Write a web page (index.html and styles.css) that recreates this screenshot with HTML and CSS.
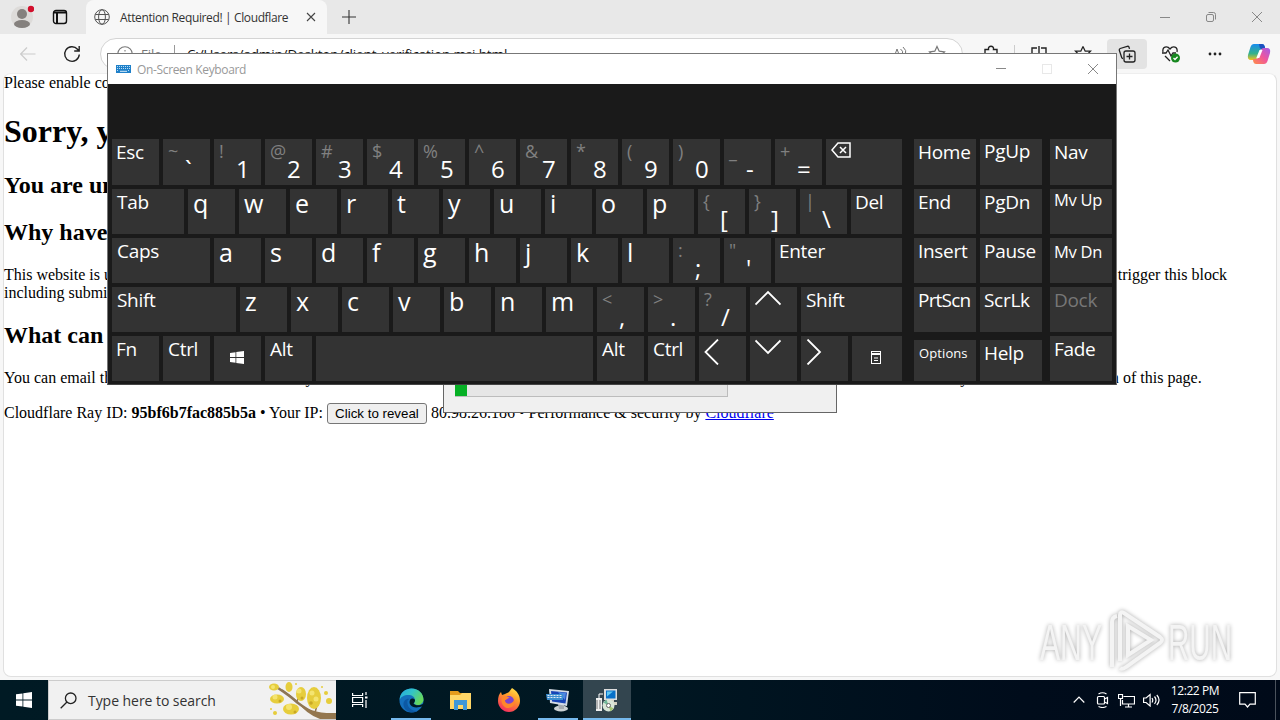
FILE: index.html
```html
<!DOCTYPE html>
<html lang="en">
<head>
    <meta charset="UTF-8">
    <meta name="viewport" content="width=device-width, initial-scale=1.0">
    <title>Attention Required! | Cloudflare</title>
    <link rel="stylesheet" href="styles.css">
</head>
<body>
    <div class="browser">
        <header class="tabstrip">
            <svg class="avatar" width="24" height="24" viewBox="0 0 24 24"><circle cx="12" cy="12" r="11" fill="#dddbd9"/><circle cx="12" cy="9" r="5" fill="#85817e"/><ellipse cx="12" cy="19" rx="8" ry="4" fill="#85817e"/><circle cx="21" cy="4" r="3.2" fill="#d20f2c"/></svg>
            <svg class="workspaces" width="16" height="16" viewBox="0 0 16 16" fill="none" stroke="#111" stroke-width="1.4"><rect x="1.5" y="1.5" width="13" height="13" rx="2.5"/><path d="M1.5 3.5h13M5 4v10" stroke-width="2"/></svg>
            <div class="tab">
                <svg width="16" height="16" viewBox="0 0 16 16" fill="none" stroke="#555"><circle cx="8" cy="8" r="7.3"/><ellipse cx="8" cy="8" rx="3.4" ry="7.3"/><path d="M1.3 5.5h13.4M1.3 10.5h13.4"/></svg>
                <span class="tab-title">Attention Required! | Cloudflare</span>
                <svg width="10" height="10" viewBox="0 0 10 10" stroke="#444" stroke-width="1.1"><path d="M1 1l8 8M9 1l-8 8"/></svg>
            </div>
            <svg class="new-tab" width="14" height="14" viewBox="0 0 14 14" stroke="#333" stroke-width="1.1"><path d="M7 0v14M0 7h14"/></svg>
            <div class="win-buttons">
                <svg width="12" height="12" viewBox="0 0 12 12" stroke="#888"><path d="M1 6.5h10"/></svg>
                <svg width="12" height="12" viewBox="0 0 12 12" fill="none" stroke="#888"><rect x="1.5" y="3.5" width="7" height="7" rx="1.5"/><path d="M3.5 1.5h5q2 0 2 2v5"/></svg>
                <svg width="12" height="12" viewBox="0 0 12 12" stroke="#888"><path d="M1 1l10 10M11 1l-10 10"/></svg>
            </div>
        </header>
        <div class="toolbar">
            <svg class="back" width="16" height="14" viewBox="0 0 16 14" fill="none" stroke="#ccc" stroke-width="1.2"><path d="M15.5 7h-15M7 .5L.7 7 7 13.5"/></svg>
            <svg class="reload" width="18" height="18" viewBox="0 0 18 18" fill="none" stroke="#222" stroke-width="1.4"><path d="M16.3 9.5a7.3 7.3 0 1 1-1.8-5.3l1.5 1.5M16.2 1v5h-5"/></svg>
            <div class="address">
                <svg width="16" height="16" viewBox="0 0 16 16" fill="none" stroke="#777" stroke-width="1.1"><circle cx="8" cy="8" r="7.3"/><path d="M8 7v5M8 4v1.5"/></svg>
                <span class="scheme">File</span>
                <span class="url">C:/Users/admin/Desktop/client_verification.msi.html</span>
                <svg width="16" height="16" viewBox="0 0 16 16" fill="none" stroke="#777"><path d="M2 14L6 3l4 11M3.5 10h5M9.500 3q3 2 2 5M12 1q4 3 2.500 8"/></svg>
                <svg class="fav" width="18" height="18" viewBox="0 0 18 18" fill="none" stroke="#777" stroke-width="1.2"><path d="M9 1.500l2.200 4.700 5.300.7-3.900 3.600 1 5.200L9 13.200l-4.600 2.500 1-5.200-3.900-3.600 5.300-.7z"/></svg>
            </div>
            <div class="tools">
                <svg class="extensions" width="18" height="18" viewBox="0 0 18 18" fill="none" stroke="#222" stroke-width="1.4"><path d="M3 4.500h3.500c-.8-4.400 5.800-4.400 5 0H15v4c-3-.5-3 4.500 0 4V16H3v-3.500c3.500.5 3.500-4.500 0-4z"/></svg>
                <i class="sep"></i>
                <span class="tool"><svg width="18" height="18" viewBox="0 0 18 18" fill="none" stroke="#222" stroke-width="1.4"><path d="M7 3H2v12h5M11 3h5v12h-5M9 1v16"/></svg></span>
                <span class="tool"><svg width="18" height="18" viewBox="0 0 18 18" fill="none" stroke="#222" stroke-width="1.3"><path d="M9 1.500l2.200 4.700H16.500l-3.900 4 1 5.200M9 1.500L6.800 6.200H1.500l3.900 4-1 5.200L9 13"/></svg></span>
                <span class="tool active"><svg width="18" height="18" viewBox="0 0 18 18" fill="none" stroke="#222" stroke-width="1.3"><path d="M5 13.500q-1 0-1.300-1L1.300 5.300Q1 4 2.200 3.500l7-2.200q1.300-.3 1.800.8l.5 1.800"/><rect x="6" y="6" width="11" height="11" rx="2"/><path d="M11.500 8.500v6M8.500 11.500h6"/></svg></span>
                <span class="tool"><svg width="20" height="18" viewBox="0 0 20 18" fill="none" stroke="#222" stroke-width="1.3"><path d="M2 7C1 2 6 0 9 4c3-4 8-2 7 3M1 8h4l2-3 3 6 2-3h3M4 11l5 5"/><circle cx="14.500" cy="13" r="4.500" fill="#16881f" stroke="none"/><path d="M12.500 13l1.500 1.500 2.600-2.800" stroke="#fff"/></svg></span>
                <span class="tool"><svg width="14" height="4" viewBox="0 0 14 4" fill="#222"><circle cx="2" cy="2" r="1.4"/><circle cx="7" cy="2" r="1.4"/><circle cx="12" cy="2" r="1.4"/></svg></span>
                <span class="tool"><svg width="24" height="22" viewBox="0 0 24 22">
                    <defs>
                        <linearGradient id="cp1" x1="0" y1="0" x2="0" y2="1"><stop offset="0" stop-color="#178cf0"/><stop offset=".6" stop-color="#35b28b"/><stop offset="1" stop-color="#f5c21d"/></linearGradient>
                        <linearGradient id="cp2" x1="1" y1="0" x2="0" y2="1"><stop offset="0" stop-color="#a25bea"/><stop offset=".5" stop-color="#f0569b"/><stop offset="1" stop-color="#ff8f45"/></linearGradient>
                    </defs>
                    <path d="M7 1h8q2 0 2.600 2l.7 3h-3q-2 0-2.700 2L10 15q-.8 2-2.500 2H4q-4 0-3-5l2.500-8Q4.500 1 7 1z" fill="url(#cp1)"/>
                    <path d="M12 1h3q2 0 2.600 2l.7 3h-3q-2 0-2.500-1z" fill="#1c50bf"/>
                    <path d="M17 21H9q-2 0-2.600-2l-.6-3h3q2 0 2.700-2L14 7q.8-2 2.500-2H20q4 0 3 5l-2.500 8q-1 3-3.500 3z" fill="url(#cp2)"/>
                    <path d="M12.500 7h3l-3.200 8h-3z" fill="#fff"/>
                </svg></span>
            </div>
        </div>
        <main class="page">
            <div>Please enable cookies.</div>
            <h1>Sorry, you have been blocked</h1>
            <h2>You are unable to access this website</h2>
            <h2>Why have I been blocked?</h2>
            <p>This website is using a security service to protect itself from online attacks. The action you just performed triggered the security solution. There are several actions that could trigger this block including submitting a certain word or phrase, a SQL command or malformed data.</p>
            <h2>What can I do to resolve this?</h2>
            <p>You can email the site owner to let them know you were blocked. Please include what you were doing when this page came up and the Cloudflare Ray ID found at the bottom of this page.</p>
            <p>Cloudflare Ray ID: <strong>95bf6b7fac885b5a</strong> • Your IP: <button class="reveal">Click to reveal</button> 80.98.26.186 • Performance &amp; security by <a href="#">Cloudflare</a></p>
        </main>
    </div>

    <!-- Installer progress dialog -->
    <div class="dialog"><div class="progress"><div class="progress-bar"></div></div></div>

    <!-- On-screen keyboard -->
    <section class="osk">
        <div class="osk-title">
            <svg width="15" height="8" viewBox="0 0 15 8"><rect width="15" height="8" fill="#1f80c9"/><path d="M1 1.500h13M1 3.500h13M1 5.500h2M12 5.500h2" stroke="#b8dcf5" stroke-dasharray="1 1"/><path d="M4 6.300h7" stroke="#d8ecfa"/></svg>
            <span>On-Screen Keyboard</span>
            <div class="osk-buttons">
                <svg width="12" height="12" viewBox="0 0 12 12" stroke="#888"><path d="M1 5.500h10"/></svg>
                <svg width="12" height="12" viewBox="0 0 12 12" fill="none" stroke="#e8e8e8"><rect x="1.500" y="1.500" width="9" height="9"/></svg>
                <svg width="12" height="12" viewBox="0 0 12 12" stroke="#888"><path d="M1 1l10 10M11 1l-10 10"/></svg>
            </div>
        </div>
        <div class="osk-body">
            <div class="keys">
                <div class="row">
                    <div class="key esc">Esc</div>
                    <div class="key dual"><sup>~</sup><b>`</b></div>
                    <div class="key dual"><sup>!</sup><b>1</b></div>
                    <div class="key dual"><sup>@</sup><b>2</b></div>
                    <div class="key dual"><sup>#</sup><b>3</b></div>
                    <div class="key dual"><sup>$</sup><b>4</b></div>
                    <div class="key dual"><sup>%</sup><b>5</b></div>
                    <div class="key dual"><sup>^</sup><b>6</b></div>
                    <div class="key dual"><sup>&amp;</sup><b>7</b></div>
                    <div class="key dual"><sup>*</sup><b>8</b></div>
                    <div class="key dual"><sup>(</sup><b>9</b></div>
                    <div class="key dual"><sup>)</sup><b>0</b></div>
                    <div class="key dual"><sup>_</sup><b>-</b></div>
                    <div class="key dual"><sup>+</sup><b>=</b></div>
                    <div class="key fill"><svg class="backspace" width="20" height="16" viewBox="0 0 20 16" fill="none" stroke="#fff" stroke-width="1.5"><path d="M7 1h12v14H7L1 8z"/><path d="M9 5l6 6M15 5l-6 6"/></svg></div>
                </div>
                <div class="row">
                    <div class="key tab-key">Tab</div>
                    <div class="key letter">q</div>
                    <div class="key letter">w</div>
                    <div class="key letter">e</div>
                    <div class="key letter">r</div>
                    <div class="key letter">t</div>
                    <div class="key letter">y</div>
                    <div class="key letter">u</div>
                    <div class="key letter">i</div>
                    <div class="key letter">o</div>
                    <div class="key letter">p</div>
                    <div class="key dual"><sup>{</sup><b>[</b></div>
                    <div class="key dual"><sup>}</sup><b>]</b></div>
                    <div class="key dual"><sup>|</sup><b>\</b></div>
                    <div class="key fill narrow-pad">Del</div>
                </div>
                <div class="row">
                    <div class="key caps">Caps</div>
                    <div class="key letter">a</div>
                    <div class="key letter">s</div>
                    <div class="key letter">d</div>
                    <div class="key letter">f</div>
                    <div class="key letter">g</div>
                    <div class="key letter">h</div>
                    <div class="key letter">j</div>
                    <div class="key letter">k</div>
                    <div class="key letter">l</div>
                    <div class="key dual"><sup>:</sup><b>;</b></div>
                    <div class="key dual"><sup>"</sup><b>'</b></div>
                    <div class="key fill narrow-pad">Enter</div>
                </div>
                <div class="row">
                    <div class="key shift">Shift</div>
                    <div class="key letter">z</div>
                    <div class="key letter">x</div>
                    <div class="key letter">c</div>
                    <div class="key letter">v</div>
                    <div class="key letter">b</div>
                    <div class="key letter">n</div>
                    <div class="key letter">m</div>
                    <div class="key dual"><sup>&lt;</sup><b>,</b></div>
                    <div class="key dual"><sup>&gt;</sup><b>.</b></div>
                    <div class="key dual"><sup>?</sup><b>/</b></div>
                    <div class="key"><svg class="arrow" width="26" height="26" viewBox="0 0 26 26"><path d="M.5 14.500L13 2l12.500 12.500"/></svg></div>
                    <div class="key fill">Shift</div>
                </div>
                <div class="row">
                    <div class="key narrow-pad">Fn</div>
                    <div class="key">Ctrl</div>
                    <div class="key icon-key"><svg width="14" height="13" viewBox="0 0 14 13" fill="#fff"><path d="M0 2l5.500-.8V6H0zM6.300 1L14 0v6H6.300zM0 6.900h5.500v4.900L0 11zM6.300 6.900H14V13l-7.700-1z"/></svg></div>
                    <div class="key">Alt</div>
                    <div class="key fill"></div>
                    <div class="key">Alt</div>
                    <div class="key">Ctrl</div>
                    <div class="key"><svg class="arrow" width="26" height="26" viewBox="0 0 26 26"><path d="M14 .5L1.500 13 14 25.500"/></svg></div>
                    <div class="key"><svg class="arrow" width="26" height="26" viewBox="0 0 26 26"><path d="M.5 1.500L13 14 25.500 1.500"/></svg></div>
                    <div class="key"><svg class="arrow" width="26" height="26" viewBox="0 0 26 26"><path d="M1.500 .5L14 13 1.500 25.500"/></svg></div>
                    <div class="key menu-key icon-key"><svg width="10" height="13" viewBox="0 0 10 13" fill="none" stroke="#fff"><rect x=".5" y=".5" width="9" height="12"/><path d="M0 2.500h10M0 3.500h10M3 7h4M3 9.500h4"/></svg></div>
                </div>
            </div>
            <div class="nav-keys">
                <div class="key">Home</div>
                <div class="key raised">PgUp</div>
                <div class="key">Nav</div>
                <div class="key">End</div>
                <div class="key">PgDn</div>
                <div class="key small up">Mv Up</div>
                <div class="key">Insert</div>
                <div class="key">Pause</div>
                <div class="key small">Mv Dn</div>
                <div class="key narrow">PrtScn</div>
                <div class="key">ScrLk</div>
                <div class="key disabled">Dock</div>
                <div class="key low tiny">Options</div>
                <div class="key low">Help</div>
                <div class="key">Fade</div>
            </div>
        </div>
    </section>

    <svg class="watermark" width="240" height="70" viewBox="0 0 240 70">
        <text x="6" y="54" textLength="62" lengthAdjust="spacingAndGlyphs">ANY</text>
        <path d="M78 61V16q0-5 5-6M86 55V9q0-4 4-2l36 24q4 3 0 6L92 61q-4 3-6 1M94 20v29l23-15z"/>
        <text x="134" y="54" textLength="64" lengthAdjust="spacingAndGlyphs">RUN</text>
    </svg>

    <footer class="taskbar">
        <div class="start"><svg width="16" height="16" viewBox="0 0 16 16" fill="#fff"><path d="M0 2.300l6.500-.9v6.200H0zM7.300 1.300L16 0v7.600H7.300zM0 8.400h6.500v6.200L0 13.700zM7.300 8.400H16V16l-8.700-1.300z"/></svg></div>
        <div class="search">
            <svg width="17" height="17" viewBox="0 0 17 17" fill="none" stroke="#222" stroke-width="1.3"><circle cx="10.700" cy="6.300" r="5.300"/><path d="M7 10L.7 16.300"/></svg>
            <span>Type here to search</span>
            <svg class="branch" width="68" height="38" viewBox="0 0 68 38">
                <path d="M10 7q12 8 20 15 8 6 22 14" fill="none" stroke="#8d7656" stroke-width="2.5"/>
                <path d="M30 21q12 12 38 11v6H52Q38 33 30 21z" fill="#93774f"/>
                <path d="M29 20l4-8M47 32l2-8" stroke="#93774f" stroke-width="1.5"/>
                <g fill="#e6cd3c"><ellipse cx="6" cy="6" rx="5" ry="3.5"/><ellipse cx="21" cy="6" rx="3.5" ry="5"/><ellipse cx="9" cy="18" rx="7" ry="4.5"/><ellipse cx="33" cy="13" rx="5" ry="7"/><ellipse cx="23" cy="28" rx="8" ry="5.5"/><ellipse cx="46" cy="17" rx="7" ry="11"/><circle cx="58" cy="12" r="2"/><circle cx="61" cy="20" r="3"/><circle cx="7" cy="32" r="2"/><circle cx="3" cy="28" r="1"/><circle cx="54" cy="6" r="1"/><circle cx="28" cy="3" r="1"/></g>
                <g fill="#f4e470"><circle cx="5" cy="6" r="2"/><circle cx="7" cy="16" r="2.5"/><circle cx="31" cy="10" r="2.5"/><circle cx="21" cy="26" r="3"/><circle cx="44" cy="12" r="2.5"/><circle cx="48" cy="18" r="2.5"/></g>
                <g fill="#c9a824"><circle cx="12" cy="20" r="1.5"/><circle cx="34" cy="17" r="1.5"/><circle cx="27" cy="31" r="1.5"/><circle cx="43" cy="22" r="1.8"/></g>
                <path d="M14 9q9 6 16 13" fill="none" stroke="#8d7656" stroke-width="2"/>
            </svg>
        </div>
        <div class="apps">
            <div class="app taskview"><svg width="16" height="16" viewBox="0 0 16 16" fill="none" stroke="#fff" stroke-width="1.2"><path d="M.6 1v2.500h10V1M.6 15v-2.500h10V15M.6 5.500h10v5H.6zM14 0v3M14 8v8"/><path d="M13 5.500h2.500" stroke-width="2"/></svg></div>
            <div class="app running">
                <svg width="25" height="25" viewBox="0 0 25 25">
                    <defs><linearGradient id="edge" x1="0" y1="0" x2="1" y2=".5"><stop offset="0" stop-color="#25a9e3"/><stop offset=".5" stop-color="#32c4c8"/><stop offset="1" stop-color="#67d85c"/></linearGradient></defs>
                    <circle cx="12.500" cy="12.500" r="12" fill="#1470bd"/>
                    <path d="M.6 12C1 4 7 .5 12.500.5 20 .5 24.500 6 24.500 11.500c0 5-6 7-9 4.500-1-1 .5-1.500.5-4 0-3-3-5-6.500-5C5 7 1.500 9 .6 12z" fill="url(#edge)"/>
                    <path d="M11 12c-2 5 3 10 13 6v-2c-4 2-8 1.500-9.500-.5.8-1 1.500-2 1.500-3.500-1-2-4-2-5 0z" fill="#001923"/>
                    <path d="M8.500 13c-1 6 4 10 10 10-5 3-13 1-14-6-.4-4 3-7 6-6-1 .5-1.700 1-2 2z" fill="#0c59a4"/>
                </svg>
            </div>
            <div class="app">
                <svg width="23" height="20" viewBox="0 0 23 20"><path d="M1 1h8l2 2h11v16H1z" fill="#e59b1c"/><path d="M1 5h10l2-2h9v16H1z" fill="#ffd667"/><path d="M5 10h13v10h-4v-5H9v5H5z" fill="#3f97d8"/></svg>
            </div>
            <div class="app">
                <svg width="24" height="24" viewBox="0 0 24 24">
                    <defs><linearGradient id="fox" x1=".8" y1="0" x2=".3" y2="1"><stop offset="0" stop-color="#ffe34a"/><stop offset=".4" stop-color="#ff9a2a"/><stop offset="1" stop-color="#f52b60"/></linearGradient></defs>
                    <path d="M15 0c5 3 8 7 8 13 0 6-5 11-11 11S1 19 1 13c0-4 1-7 3-9l1 3 3-1c2-1 4-2 4-2 1-1 2-3 3-4z" fill="url(#fox)"/>
                    <circle cx="12" cy="13" r="5" fill="#7b43d0"/><path d="M5 9c3-1 5-1 8 1-3 0-3 2-5 2 0 5 7 5 9 0 2 5-2 8-6 8s-8-5-6-11z" fill="#ff862c"/>
                </svg>
            </div>
            <div class="app running">
                <svg width="24" height="24" viewBox="0 0 24 24"><ellipse cx="15" cy="20.500" rx="7" ry="3" fill="#cbd1d3"/><path d="M12 16h6v5h-5z" fill="#a5abb0"/><path d="M3 1l20 2-2 15L4 15z" fill="#d3dbe5"/><path d="M5 3l16 1.500-1.500 11L6 13.500z" fill="#1744b6"/><path d="M12 4l8 1-1 7z" fill="#4c87e1"/><path d="M0 6h17v6H1z" fill="#3b8ed0"/><path d="M1.500 7.500h15M1.500 9.500h15" stroke="#e3eaf2" stroke-dasharray="2 1"/></svg>
            </div>
            <div class="app active running">
                <svg width="24" height="24" viewBox="0 0 24 24"><path d="M9 1h13v11H9z" fill="#ddd"/><path d="M11 2.500h9.500v8H11z" fill="#0870c9"/><path d="M12 3.500h6l-6 5z" fill="#5fc8f3"/><path d="M12 12h7v2h3v3H11z" fill="#d5d2c3"/><path d="M1 10h6v13H1z" fill="#eee"/><path d="M2 12v9M5 12v9" stroke="#777"/><path d="M8 6H4v5" stroke="#fff" fill="none"/><circle cx="13.500" cy="17.500" r="6" fill="#d9e6d8"/><path d="M13.500 17.500l-5-3 3-3z" fill="#70b798"/><path d="M13.500 17.500l5 3-3 3z" fill="#a3c66f"/><circle cx="13.500" cy="17.500" r="2" fill="#fff" stroke="#666"/></svg>
            </div>
        </div>
        <div class="tray">
            <svg class="chevron" width="12" height="8" viewBox="0 0 12 8"><path d="M.7 6.500L6 1.200l5.300 5.300"/></svg>
            <svg width="14" height="16" viewBox="0 0 14 16"><rect x="1.500" y="4.500" width="7" height="7.500" rx="1"/><path d="M8.500 7l3-1.500v6l-3-1.500M2.500 2Q6.500-.5 10.500 2M2.500 14.500q4 2 8 0"/></svg>
            <svg width="17" height="15" viewBox="0 0 17 15"><path d="M5.500 3.500h11v7.500h-12V7M10.500 11v3M7 14h7M.5 1.500h4v4h-4zM2.500 5.500V13"/></svg>
            <svg width="17" height="14" viewBox="0 0 17 14"><path d="M.6 5v4.500h2.500l4 3.500V1.500L3.100 5zM9 5q1.500 2.300 0 4.500M11.500 3.500q3 3.700 0 7.300M13.800 2q4.500 5 0 10"/></svg>
            <div class="clock">12:22 PM<br>7/8/2025</div>
            <svg class="notify" width="17" height="16" viewBox="0 0 17 16"><path d="M.7.7h15.600v11.500H11L8.500 15 6 12.200H.7z"/></svg>
            <i class="peek"></i>
        </div>
    </footer>
</body>
</html>
```
FILE: styles.css
```css
* {
    box-sizing: border-box;
}

body {
    margin: 0;
    width: 1280px;
    height: 720px;
    overflow: hidden;
    position: relative;
    font-family: "Open Sans", "Noto Sans", sans-serif;
}

svg {
    display: block;
    flex: none;
}

/* Browser window */
.browser {
    height: 680px;
    background: #f7f7f7;
    display: flex;
    flex-direction: column;
}

.tabstrip {
    height: 34px;
    flex: none;
    display: flex;
    align-items: center;
    background: #e8e8e8;
}

.avatar {
    margin: 0 0 0 10px;
}

.workspaces {
    margin: 0 18px;
}

.tab {
    width: 241px;
    height: 34px;
    display: flex;
    align-items: center;
    padding: 0 11px 0 8px;
    background: #f7f7f7;
    border-radius: 8px 8px 0 0;
}

.tab-title {
    flex: 1;
    margin-left: 10px;
    font-size: 12px;
    letter-spacing: -0.37px;
    white-space: nowrap;
    color: #333;
}

.new-tab {
    margin-left: 15px;
}

.win-buttons {
    margin-left: auto;
    margin-right: 17px;
    display: flex;
    gap: 34px;
}

.toolbar {
    height: 39px;
    flex: none;
    display: flex;
    align-items: center;
    padding-left: 20px;
}

.reload {
    margin: 0 19px 0 27px;
}

.address {
    width: 863px;
    height: 32px;
    display: flex;
    align-items: center;
    padding: 0 16px;
    background: #fff;
    border: 1px solid #d4d4d4;
    border-radius: 16px;
}

.scheme {
    width: 34px;
    height: 18px;
    margin-left: 8px;
    line-height: 18px;
    font-size: 13px;
    color: #777;
    border-right: 1px solid #999;
}

.url {
    flex: 1;
    margin-left: 12px;
    font-size: 13.5px;
    letter-spacing: -0.15px;
    color: #111;
}

.fav {
    margin-left: 21px;
}

.tools {
    flex: 1;
    display: flex;
    align-items: center;
}

.extensions {
    margin-left: 19px;
}

.sep {
    width: 1px;
    height: 18px;
    margin-left: 14px;
    background: #ccc;
}

.tool {
    width: 40px;
    height: 30px;
    margin-right: 4px;
    display: flex;
    align-items: center;
    justify-content: center;
    border-radius: 4px;
}

.tool.active {
    background: #e3e3e3;
}

.sep + .tool {
    margin-left: 4px;
}

.tool:last-child {
    margin: 0;
}

.page {
    flex: 1;
    margin: 0 3px 3px;
    background: #fff;
    border: 1px solid #e0e0e0;
    border-top-color: #eee;
    border-radius: 8px;
    font-family: "Liberation Serif", serif;
    font-size: 16px;
    color: #000;
}

.page h1 {
    margin: 21.44px 0;
    font-size: 32px;
}

.page h2 {
    margin: 19.92px 0;
    font-size: 24px;
}

.page p {
    margin: 16px 0;
}

.reveal {
    width: 100px;
    height: 21px;
    padding: 0;
    font: 13.333px "Liberation Sans", sans-serif;
    color: #000;
    background: #efefef;
    border: 1px solid #767676;
    border-radius: 3px;
}

.page a {
    color: #0000ee;
}

/* Installer dialog */
.dialog {
    position: absolute;
    left: 443px;
    top: 300px;
    width: 394px;
    height: 113px;
    padding: 80px 0 0 11px;
    background: #f0f0f0;
    border: 1px solid #666;
}

.progress {
    width: 273px;
    height: 16px;
    background: #e6e6e6;
    border: 1px solid #bcbcbc;
    border-left: 0;
}

.progress-bar {
    width: 12px;
    height: 14px;
    background: #06b025;
}

/* On-screen keyboard */
.osk {
    position: absolute;
    left: 107px;
    top: 53px;
    width: 1010px;
    height: 332px;
    border: 1px solid #777;
    border-bottom-color: #444;
    background: #1a1a1a;
}

.osk-title {
    height: 30px;
    display: flex;
    align-items: center;
    padding: 0 17px 0 8px;
    background: #fff;
    font-size: 12px;
    letter-spacing: -0.35px;
    color: #999;
}

.osk-title span {
    margin-left: 6px;
}

.osk-buttons {
    margin-left: auto;
    display: flex;
    gap: 34px;
}

.osk-body {
    display: flex;
    justify-content: space-between;
    padding: 55px 4px 0;
}

.keys {
    width: 790px;
    display: flex;
    flex-direction: column;
    gap: 4px;
}

.row {
    height: 45px;
    display: flex;
    gap: 4px;
}

.row:first-child {
    height: 46px;
}

.key {
    width: 47px;
    flex: none;
    padding-left: 5px;
    background: #333;
    color: #fff;
    font-size: 19px;
    line-height: 26px;
    letter-spacing: -0.3px;
    white-space: nowrap;
}

.key.fill {
    flex: 1;
}

.esc,
.narrow-pad {
    padding-left: 4px;
}

.tab-key {
    width: 72px;
}

.caps {
    width: 98px;
}

.shift {
    width: 124px;
}

.letter {
    font-size: 25px;
    line-height: 29px;
    letter-spacing: 0;
}

.dual {
    display: grid;
}

.dual sup,
.dual b {
    grid-area: 1 / 1;
    justify-self: start;
    align-self: start;
    font-weight: normal;
}

.dual sup {
    font-size: 18px;
    line-height: 24px;
    color: #808080;
    padding-left: 0;
}

.dual b {
    margin: 18px 0 0 17px;
    font-size: 24px;
    line-height: 24px;
}

.backspace {
    margin-top: 3px;
}

.arrow {
    margin-top: 3px;
    fill: none;
    stroke: #fff;
    stroke-width: 1.8;
}

.icon-key {
    display: flex;
    align-items: center;
    justify-content: center;
    padding: 0 2px 2px 0;
}

.key.menu-key {
    width: 50px;
}

.nav-keys {
    display: grid;
    grid-template-columns: 62px 62px 62px;
    grid-template-rows: 46px 45px 45px 45px 45px;
    gap: 4px;
    width: 198px;
}

.nav-keys .key {
    width: 62px;
    padding-left: 4px;
}

.nav-keys .key:nth-child(3n) {
    margin-left: 4px;
}

.nav-keys .raised {
    line-height: 24px;
}

.nav-keys .small {
    font-size: 16.5px;
    line-height: 28px;
}

.nav-keys .small.up {
    line-height: 22px;
}

.nav-keys .narrow {
    letter-spacing: -0.8px;
}

.nav-keys .low {
    margin-top: 4px;
}

.nav-keys .tiny {
    padding-left: 5px;
    font-size: 13px;
    letter-spacing: 0.1px;
}

.nav-keys .disabled {
    color: #777;
}

.watermark {
    position: absolute;
    left: 1034px;
    top: 606px;
    filter: drop-shadow(0 0 2px #aaa);
}

.watermark text {
    font: 50px "Liberation Sans", sans-serif;
    fill: #f4f4f4;
}

.watermark path {
    fill: none;
    stroke: #f4f4f4;
    stroke-width: 4;
}

/* Taskbar */
.taskbar {
    height: 40px;
    display: flex;
    background: linear-gradient(90deg, #001a24, #001722 50%, #000c1b 80%, #000a19);
    color: #fff;
}

.start {
    width: 48px;
    display: flex;
    align-items: center;
    justify-content: center;
}

.search {
    width: 288px;
    display: flex;
    align-items: center;
    padding-left: 11px;
    background: #f1f1f1;
    border: 1px solid #ccc;
    border-right: 0;
    color: #333;
    font-size: 14px;
}

.search span {
    flex: 1;
    margin-left: 11px;
    letter-spacing: -0.05px;
}

.apps {
    display: flex;
    gap: 1px;
}

.app {
    position: relative;
    width: 48px;
    display: flex;
    align-items: center;
    justify-content: center;
}

.taskview {
    margin-right: 2px;
}

.app.active {
    background: #33454f;
}

.app.running::after {
    content: "";
    position: absolute;
    left: 4px;
    right: 4px;
    bottom: 0;
    height: 2px;
    background: #76b9ed;
}

.app.active::after {
    left: 0;
    right: 0;
}

.tray {
    margin-left: auto;
    display: flex;
    align-items: center;
    gap: 8px;
}

.tray svg {
    fill: none;
    stroke: #fff;
    stroke-width: 1.2;
}

.tray .chevron {
    margin-right: 3px;
}

.clock {
    width: 54px;
    text-align: center;
    font-size: 12px;
    line-height: 18px;
    letter-spacing: -0.4px;
    white-space: nowrap;
}

.notify {
    margin-left: 9px;
}

.peek {
    width: 1px;
    height: 40px;
    margin: 0 4px 0 11px;
    background: #4a525c;
}
```
